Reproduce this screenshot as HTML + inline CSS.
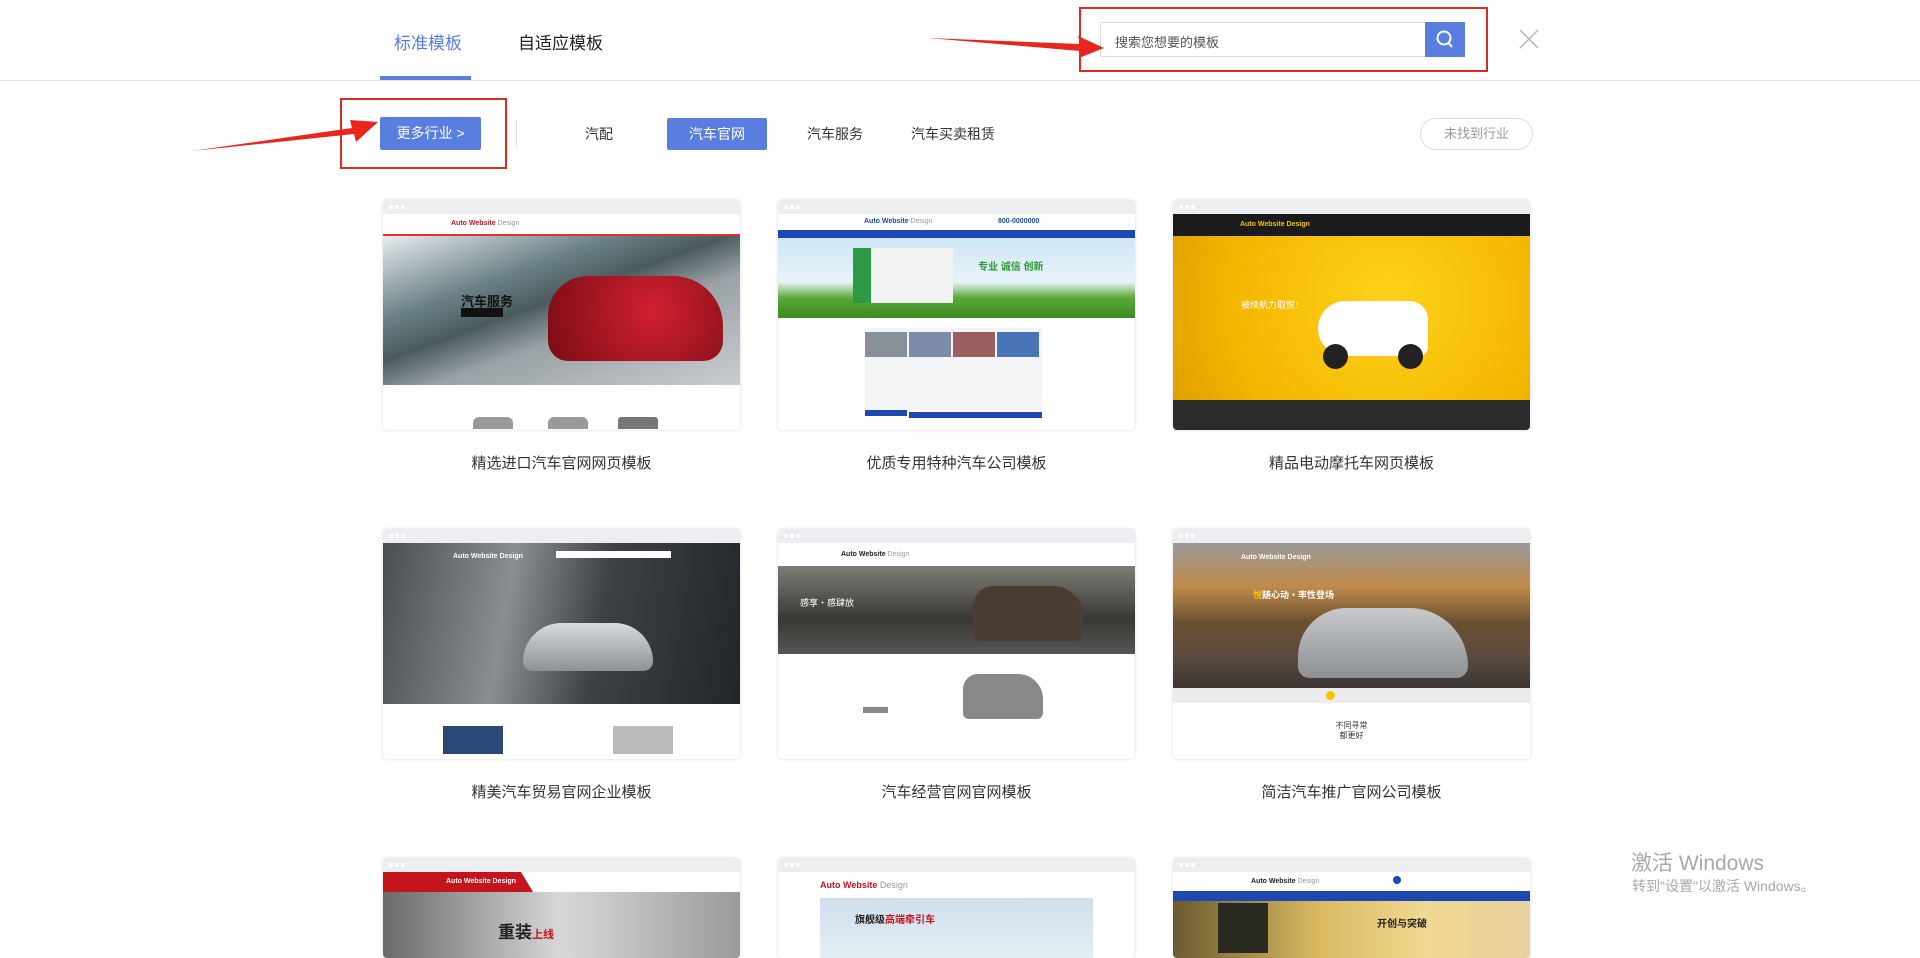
<!DOCTYPE html>
<html><head><meta charset="utf-8"><style>
*{margin:0;padding:0;box-sizing:border-box}
body{width:1920px;height:944px;overflow:hidden;background:#fff;font-family:"Liberation Sans","Noto Sans CJK SC",sans-serif;position:relative;color:#333}
.a{position:absolute}
.tab{font-size:17px;top:29px}
.card{position:absolute;width:357px;height:230px;background:#fff;box-shadow:0 0 3px rgba(0,0,0,.15);border-radius:4px;overflow:hidden}
.chrome{height:14px;background:#eceef1;position:relative}
.chrome i{position:absolute;top:5px;width:4px;height:4px;border-radius:50%;background:#fff}
.lbl{position:absolute;width:357px;text-align:center;font-size:15px;color:#333}
.logo{font-size:7px;font-weight:bold;position:absolute}
</style></head><body>
<!-- header -->
<div class="a tab" style="left:394px;color:#5a7ee0">标准模板</div>
<div class="a" style="left:380px;top:76px;width:91px;height:4px;background:#5a7ee0"></div>
<div class="a tab" style="left:518px;color:#222">自适应模板</div>
<div class="a" style="left:0;top:80px;width:1920px;height:1px;background:#e3e3e3"></div>
<div class="a" style="left:1079px;top:7px;width:409px;height:65px;border:2px solid #e02a20"></div>
<div class="a" style="left:1100px;top:22px;width:326px;height:35px;border:1px solid #ddd;border-right:none;font-size:13px;color:#555;padding:9px 0 0 14px">搜索您想要的模板</div>
<div class="a" style="left:1425px;top:22px;width:40px;height:35px;background:#5a7ee0">
<svg width="40" height="35"><circle cx="19" cy="16" r="6.5" fill="none" stroke="#fff" stroke-width="2"/><line x1="23.5" y1="21" x2="27" y2="25" stroke="#fff" stroke-width="2"/></svg></div>
<svg class="a" style="left:1518px;top:28px" width="22" height="22"><path d="M2 2L20 20M20 2L2 20" stroke="#bbb" stroke-width="1.6"/></svg>
<svg class="a" style="left:0;top:0" width="1920" height="200">
<polygon points="928,38 1080,44 1078,36 1104,48 1079,58 1080,51" fill="#e8261e"/>
<polygon points="192,151 352,128 350,120 378,122 356,142 354,134" fill="#e8261e"/>
</svg>
<!-- row 2 -->
<div class="a" style="left:340px;top:98px;width:167px;height:71px;border:2px solid #e02a20"></div>
<div class="a" style="left:380px;top:117px;width:101px;height:33px;background:#5a7ee0;border-radius:2px;color:#fff;font-size:14px;text-align:center;line-height:33px">更多行业 &gt;</div>
<div class="a" style="left:516px;top:120px;width:1px;height:28px;background:#e2e2e2"></div>
<div class="a" style="left:585px;top:124px;font-size:14px">汽配</div>
<div class="a" style="left:667px;top:118px;width:100px;height:32px;background:#5a7ee0;border-radius:2px;color:#fff;font-size:14px;text-align:center;line-height:32px">汽车官网</div>
<div class="a" style="left:807px;top:124px;font-size:14px">汽车服务</div>
<div class="a" style="left:911px;top:124px;font-size:14px">汽车买卖租赁</div>
<div class="a" style="left:1420px;top:118px;width:113px;height:32px;border:1px solid #ddd;border-radius:16px;color:#999;font-size:13px;text-align:center;line-height:30px">未找到行业</div>

<!-- card 1 -->
<div class="card" style="left:383px;top:200px"><div class="chrome"><i style="left:6px"></i><i style="left:12px"></i><i style="left:18px"></i></div>
<div style="height:20px;position:relative"><span class="logo" style="left:68px;top:6px;color:#c0181e">Auto Website <span style="color:#999;font-weight:normal">Design</span></span></div>
<div style="height:2px;background:#d33"></div>
<div style="height:149px;background:linear-gradient(160deg,#e8ecee 0%,#6b8288 30%,#4a5b5e 45%,#9aa2a6 60%,#c9cdd0 100%);position:relative">
<div style="position:absolute;left:165px;top:40px;width:175px;height:85px;border-radius:40px 50px 20px 20px;background:radial-gradient(circle at 60% 40%,#d02030,#7a0c14)"></div>
<div style="position:absolute;left:78px;top:55px;color:#111;font-size:13px;font-weight:bold">汽车服务</div>
<div style="position:absolute;left:78px;top:72px;width:42px;height:9px;background:#111"></div></div>
<div style="height:45px;position:relative"><div style="position:absolute;left:90px;top:32px;width:40px;height:12px;background:#999;border-radius:6px 6px 0 0"></div><div style="position:absolute;left:165px;top:32px;width:40px;height:12px;background:#999;border-radius:6px 6px 0 0"></div><div style="position:absolute;left:235px;top:32px;width:40px;height:12px;background:#777;border-radius:3px 3px 0 0"></div></div></div>
<div class="lbl" style="left:383px;top:452px">精选进口汽车官网网页模板</div>

<!-- card 2 -->
<div class="card" style="left:778px;top:200px"><div class="chrome"><i style="left:6px"></i><i style="left:12px"></i><i style="left:18px"></i></div>
<div style="height:16px;position:relative"><span class="logo" style="left:86px;top:4px;color:#1d48b0">Auto Website <span style="color:#999;font-weight:normal">Design</span></span><span class="logo" style="left:220px;top:4px;color:#1d48b0">800-0000000</span></div>
<div style="height:8px;background:#1d48b0"></div>
<div style="height:80px;background:linear-gradient(180deg,#cfe6f5 0%,#e8f3f8 55%,#5aa838 75%,#3b8a22 100%);position:relative"><div style="position:absolute;left:75px;top:10px;width:100px;height:55px;background:#f2f4f4;border-left:18px solid #2d9a47"></div><div style="position:absolute;left:200px;top:20px;font-size:10px;color:#2a9a30;font-weight:bold">专业 诚信 创新</div></div>
<div style="position:relative;height:112px">
<div style="position:absolute;left:87px;top:10px;width:177px;height:82px;background:#f3f4f6"></div>
<div style="position:absolute;left:87px;top:14px;width:42px;height:25px;background:#8a9098"></div><div style="position:absolute;left:131px;top:14px;width:42px;height:25px;background:#7c8ca8"></div><div style="position:absolute;left:175px;top:14px;width:42px;height:25px;background:#9a6060"></div><div style="position:absolute;left:219px;top:14px;width:42px;height:25px;background:#4a74b8"></div>
<div style="position:absolute;left:87px;top:92px;width:42px;height:6px;background:#1d48b0"></div><div style="position:absolute;left:131px;top:94px;width:133px;height:6px;background:#1d48b0"></div></div></div>
<div class="lbl" style="left:778px;top:452px">优质专用特种汽车公司模板</div>

<!-- card 3 -->
<div class="card" style="left:1173px;top:200px"><div class="chrome"><i style="left:6px"></i><i style="left:12px"></i><i style="left:18px"></i></div>
<div style="height:22px;background:#1b1b1b;position:relative"><span class="logo" style="left:67px;top:7px;color:#f2c200">Auto Website Design</span></div>
<div style="height:164px;background:radial-gradient(circle at 60% 40%,#ffd21a,#f2b400 70%,#e0a000);position:relative"><div style="position:absolute;left:145px;top:65px;width:110px;height:55px;background:#fff;border-radius:30px 20px 10px 30px"></div><div style="position:absolute;left:150px;top:108px;width:25px;height:25px;border-radius:50%;background:#222"></div><div style="position:absolute;left:225px;top:108px;width:25px;height:25px;border-radius:50%;background:#222"></div><div style="position:absolute;left:68px;top:62px;font-size:9px;color:#fff">被续航力取悦！</div></div>
<div style="height:30px;background:#2b2b2b"></div></div>
<div class="lbl" style="left:1173px;top:452px">精品电动摩托车网页模板</div>

<!-- card 4 -->
<div class="card" style="left:383px;top:529px"><div class="chrome"><i style="left:6px"></i><i style="left:12px"></i><i style="left:18px"></i></div>
<div style="height:161px;background:linear-gradient(100deg,#4a4d52 0%,#8a8d92 35%,#3e4146 60%,#222528 100%);position:relative"><span class="logo" style="left:70px;top:10px;color:#fff">Auto Website Design</span><div style="position:absolute;left:173px;top:8px;width:115px;height:7px;background:#fff"></div><div style="position:absolute;left:140px;top:80px;width:130px;height:48px;border-radius:40px 40px 10px 10px;background:linear-gradient(#d8dadc,#8e9296)"></div></div>
<div style="height:55px;position:relative"><div style="position:absolute;left:60px;top:22px;width:60px;height:28px;background:#2a4878"></div><div style="position:absolute;left:230px;top:22px;width:60px;height:28px;background:#bbb"></div></div></div>
<div class="lbl" style="left:383px;top:781px">精美汽车贸易官网企业模板</div>

<!-- card 5 -->
<div class="card" style="left:778px;top:529px"><div class="chrome"><i style="left:6px"></i><i style="left:12px"></i><i style="left:18px"></i></div>
<div style="height:23px;position:relative"><span class="logo" style="left:63px;top:8px;color:#222">Auto Website <span style="color:#999;font-weight:normal">Design</span></span></div>
<div style="height:88px;background:linear-gradient(180deg,#7d7d78,#3a3834 60%,#555);position:relative"><div style="position:absolute;left:195px;top:20px;width:110px;height:55px;border-radius:20px 30px 8px 8px;background:#4a3e34"></div><div style="position:absolute;left:22px;top:30px;font-size:9px;color:#fff">感享・感肆放</div></div>
<div style="height:105px;position:relative"><div style="position:absolute;left:185px;top:20px;width:80px;height:45px;border-radius:15px 25px 6px 6px;background:#888"></div><div style="position:absolute;left:85px;top:53px;width:25px;height:6px;background:#888"></div></div></div>
<div class="lbl" style="left:778px;top:781px">汽车经营官网官网模板</div>

<!-- card 6 -->
<div class="card" style="left:1173px;top:529px"><div class="chrome"><i style="left:6px"></i><i style="left:12px"></i><i style="left:18px"></i></div>
<div style="height:145px;background:linear-gradient(180deg,#9a9a98 0%,#c08a4a 30%,#6a5030 55%,#5a4a40 80%,#3a3430 100%);position:relative"><span class="logo" style="left:68px;top:11px;color:#fff">Auto Website Design</span><div style="position:absolute;left:125px;top:65px;width:170px;height:70px;border-radius:50px 60px 12px 12px;background:linear-gradient(#c8cacd,#8d9094)"></div><div style="position:absolute;left:80px;top:45px;font-size:9px;color:#fff;font-weight:bold"><span style="color:#f5c400">悦</span>随心动・率性登场</div></div>
<div style="height:15px;background:#ececec;position:relative"><div style="position:absolute;left:153px;top:3px;width:9px;height:9px;border-radius:50%;background:#f5c400"></div></div>
<div style="height:56px;text-align:center;font-size:8px;padding-top:18px;line-height:10px">不同寻常<br>都更好</div></div>
<div class="lbl" style="left:1173px;top:781px">简洁汽车推广官网公司模板</div>

<!-- row 3 -->
<div class="card" style="left:383px;top:858px;height:100px"><div class="chrome"><i style="left:6px"></i><i style="left:12px"></i><i style="left:18px"></i></div>
<div style="height:20px;position:relative;background:#fff"><div style="position:absolute;left:0;top:0;width:150px;height:20px;background:#c4141c;clip-path:polygon(0 0,92% 0,100% 100%,0 100%)"></div><span class="logo" style="left:63px;top:6px;color:#fff">Auto Website Design</span></div>
<div style="height:70px;background:linear-gradient(90deg,#6a6a6a,#d8d8d8 50%,#9a9a9a);position:relative"><div style="position:absolute;left:115px;top:26px;font-size:17px;font-weight:bold;color:#222">重装<span style="color:#c4141c;font-size:11px">上线</span></div></div></div>
<div class="card" style="left:778px;top:858px;height:100px"><div class="chrome"><i style="left:6px"></i><i style="left:12px"></i><i style="left:18px"></i></div>
<div style="height:20px;position:relative"><span class="logo" style="left:42px;top:8px;color:#c4141c;font-size:9px">Auto Website <span style="color:#999;font-weight:normal">Design</span></span></div>
<div style="height:70px;margin:6px 42px 0;background:linear-gradient(#cfe0ee,#e8f0f6);position:relative"><div style="position:absolute;left:35px;top:13px;font-size:10px;font-weight:bold;color:#222">旗舰级<span style="color:#c4141c">高端牵引车</span></div></div></div>
<div class="card" style="left:1173px;top:858px;height:100px"><div class="chrome"><i style="left:6px"></i><i style="left:12px"></i><i style="left:18px"></i></div>
<div style="height:19px;position:relative"><span class="logo" style="left:78px;top:6px;color:#222">Auto Website <span style="color:#999;font-weight:normal">Design</span></span><div style="position:absolute;left:220px;top:4px;width:8px;height:8px;border-radius:50%;background:#1d48b0"></div></div>
<div style="height:10px;background:#1d48b0"></div>
<div style="height:70px;background:linear-gradient(90deg,#6a5a30,#d8b860 40%,#f0d890 70%,#e8d0a0);position:relative"><div style="position:absolute;left:45px;top:2px;width:50px;height:50px;background:#2a2a20"></div><div style="position:absolute;left:204px;top:14px;font-size:10px;font-weight:bold;color:#222">开创与突破</div></div></div>

<div class="a" style="left:1631px;top:847px;font-size:21px;color:#a8a8a8">激活 Windows</div>
<div class="a" style="left:1632px;top:876px;font-size:14px;color:#a8a8a8">转到"设置"以激活 Windows。</div>
</body></html>
